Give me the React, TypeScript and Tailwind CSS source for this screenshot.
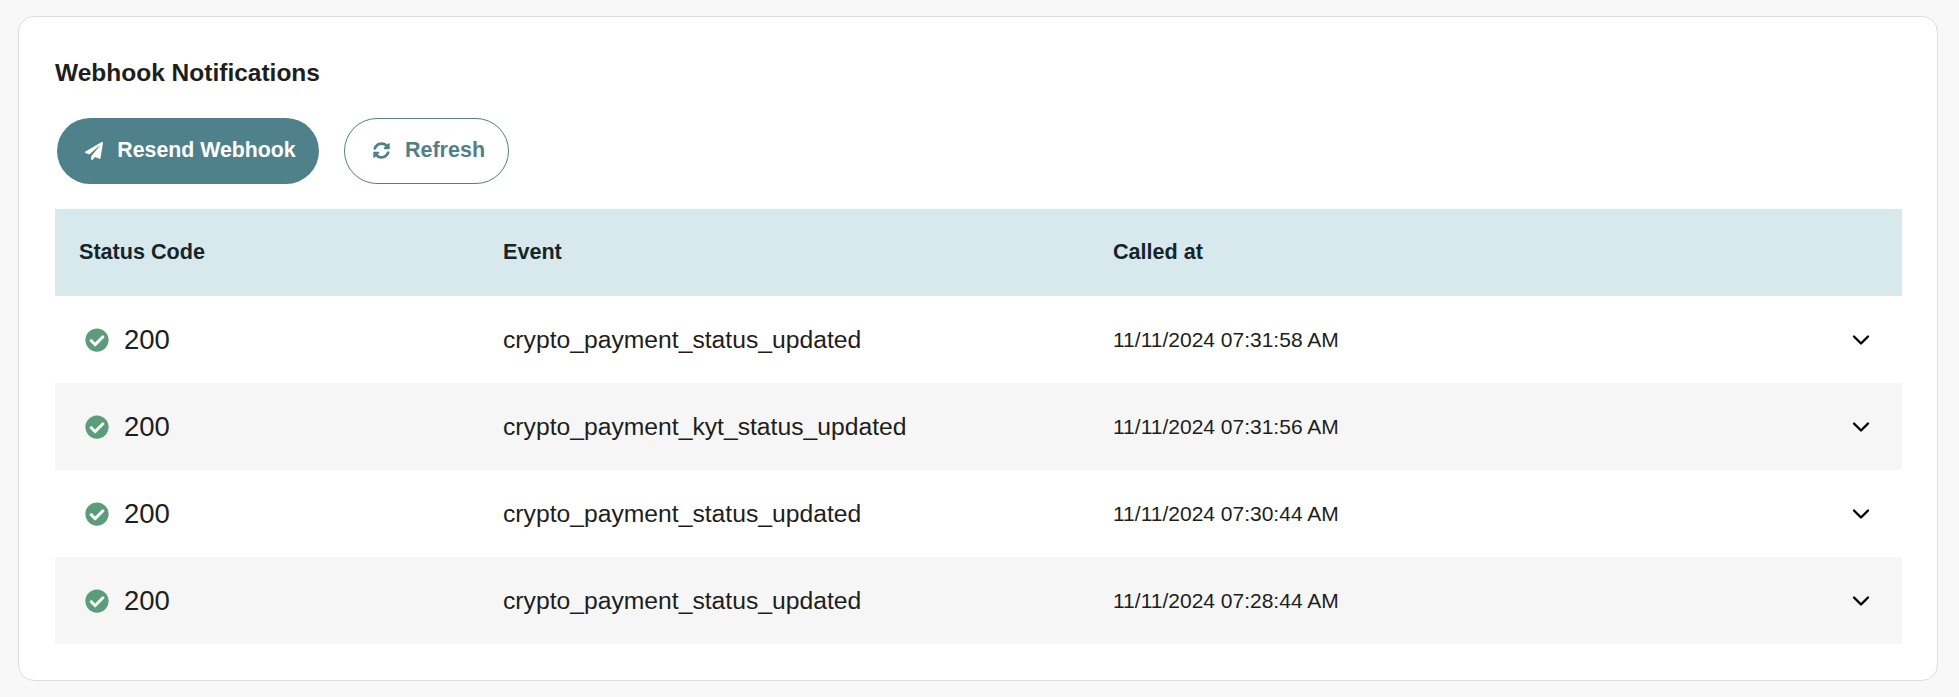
import { ChevronDown } from "lucide-react";
import { FaCheckCircle, FaPaperPlane, FaSyncAlt } from "react-icons/fa";

const rows = [
  { code: 200, event: "crypto_payment_status_updated", calledAt: "11/11/2024 07:31:58 AM" },
  { code: 200, event: "crypto_payment_kyt_status_updated", calledAt: "11/11/2024 07:31:56 AM" },
  { code: 200, event: "crypto_payment_status_updated", calledAt: "11/11/2024 07:30:44 AM" },
  { code: 200, event: "crypto_payment_status_updated", calledAt: "11/11/2024 07:28:44 AM" },
];

export default function App() {
  return (
    <div className="h-[697px] bg-[#f8f8f8] pt-4 pl-[18px] pr-[21px] font-['Liberation_Sans',sans-serif]">
      <section className="h-[665px] rounded-2xl border border-[#dcdddd] bg-white pl-[36px] pr-[35px] pt-[41px]">
        <h2 className="text-[24.5px] font-bold leading-[30px] text-[#201e1c]">Webhook Notifications</h2>

        <div className="mt-[30px] flex gap-[25px]">
          <button
            type="button"
            className="ml-[2px] flex h-[66px] w-[262px] items-center justify-center gap-[14px] rounded-full bg-[#4f818b] pb-px pl-[5px] text-[21.3px] font-bold text-white"
          >
            <FaPaperPlane size={18} />
            Resend Webhook
          </button>
          <button
            type="button"
            className="flex h-[66px] w-[165px] items-center justify-center gap-[15px] rounded-full border border-[#4f818b] bg-white pb-px pl-[5px] text-[21.5px] font-bold text-[#4f818b]"
          >
            <FaSyncAlt size={17} />
            Refresh
          </button>
        </div>

        <div className="mt-[25px]">
          <div className="grid h-[87px] grid-cols-[424px_610px_1fr] items-center bg-[#d8e9ed] pl-6 text-[21.6px] font-bold text-[#14262b]">
            <span>Status Code</span>
            <span>Event</span>
            <span>Called at</span>
          </div>
          <div>
            {rows.map((row, i) => (
              <div
                key={i}
                className="grid h-[87px] grid-cols-[424px_610px_1fr_auto] items-center pl-[30px] pr-[27px] text-[#201e1c] even:bg-[#f6f6f6]"
              >
                <div className="flex items-center gap-[15px] text-[27.5px]">
                  <FaCheckCircle size={24} className="text-[#5b9d7a]" />
                  {row.code}
                </div>
                <span className="-ml-1.5 text-[24.7px]">{row.event}</span>
                <span className="-ml-1.5 text-[21px]">{row.calledAt}</span>
                <ChevronDown size={28} strokeWidth={2} className="text-black" />
              </div>
            ))}
          </div>
        </div>
      </section>
    </div>
  );
}
